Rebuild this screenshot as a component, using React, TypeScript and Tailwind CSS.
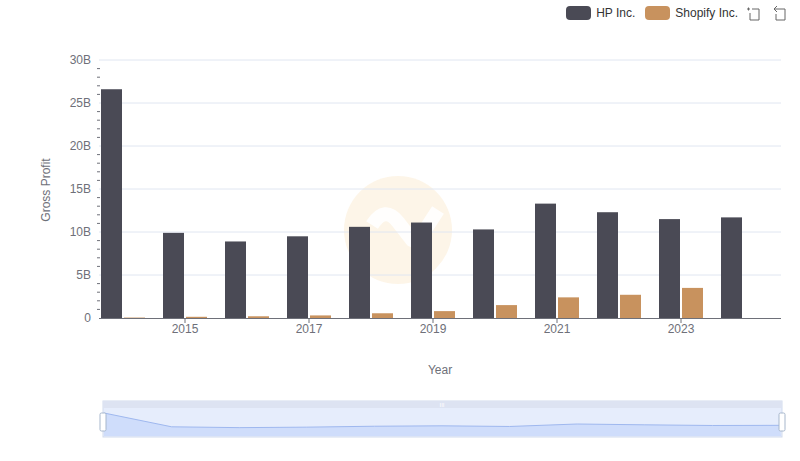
export default function App() {
  const hp = [26.6, 9.9, 8.9, 9.5, 10.6, 11.1, 10.3, 13.3, 12.3, 11.5, 11.7];
  const sh = [0.05, 0.14, 0.2, 0.3, 0.55, 0.8, 1.5, 2.4, 2.7, 3.5, 0];
  const x0 = 99, cw = 62, y0 = 318, k = 258 / 30;
  const ticks = [0, 5, 10, 15, 20, 25, 30];
  const minor: number[] = [];
  for (let i = 0; i <= 30; i++) if (i % 5) minor.push(i);
  const zx = (i: number) => 104 + (i * 676) / 10;
  const zy = (v: number) => 435 - (v / 26.6) * 22;
  const line = hp.map((v, i) => `${zx(i)},${zy(v)}`).join(" ");
  return (
    <div className="relative w-[800px] h-[461px] bg-white" style={{ fontFamily: '"Liberation Sans", Arial, sans-serif' }}>
      <div className="absolute top-[4px] right-[12px] flex items-center text-[12px] text-[#333]">
        <div className="w-[25px] h-[14px] rounded-[4px] bg-[#4a4a55] mr-[5px]" />
        <span className="mr-[10px]">HP Inc.</span>
        <div className="w-[25px] h-[14px] rounded-[4px] bg-[#c8925e] mr-[5px]" />
        <span className="mr-[8px]">Shopify Inc.</span>
        <svg width="16" height="16" viewBox="0 0 16 16" className="mr-[10px]" fill="none" stroke="#666" strokeWidth="1">
          <path d="M1 4h3M2.5 2.5v3M6 4h7v11H4V8" />
        </svg>
        <svg width="16" height="16" viewBox="0 0 16 16" fill="none" stroke="#666" strokeWidth="1">
          <path d="M5 1L2 4l3 3M2 4h11v11H4V9" />
        </svg>
      </div>
      <svg width="800" height="461" className="block">
        <g opacity="0.12">
          <circle cx="398" cy="230" r="54" fill="#f0b040" />
        </g>
        <path d="M372 225 Q385 205 398 222 L412 240 Q420 245 425 230 L438 210" stroke="white" strokeWidth="14" fill="none" opacity="0.9" />
        {ticks.map((t) => (
          <g key={t}>
            {t > 0 && <line x1={x0} x2={781} y1={y0 - t * k} y2={y0 - t * k} stroke="#e0e6f1" />}
            <text x={91} y={y0 - t * k + 4} textAnchor="end" fontSize="12" fill="#6e7079">{t === 0 ? "0" : `${t}B`}</text>
          </g>
        ))}
        {minor.map((m) => (
          <line key={m} x1={97} x2={100} y1={y0 - m * k} y2={y0 - m * k} stroke="#6e7079" />
        ))}
        <text transform="translate(50 190) rotate(-90)" textAnchor="middle" fontSize="12" fill="#6e7079">Gross Profit</text>
        {hp.map((v, i) => {
          const cx = x0 + i * cw;
          return (
            <g key={i}>
              <rect x={cx + 2} y={y0 - v * k} width={21} height={v * k} fill="#4a4a55" />
              {sh[i] > 0 && <rect x={cx + 25} y={y0 - sh[i] * k} width={21} height={Math.max(sh[i] * k, 1)} fill="#c8925e" />}
            </g>
          );
        })}
        <line x1={x0} x2={781} y1={y0 + 0.5} y2={y0 + 0.5} stroke="#6e7079" />
        {[1, 3, 5, 7, 9].map((i) => {
          const tx = x0 + i * cw + 24;
          return (
            <g key={i}>
              <line x1={tx} x2={tx} y1={y0} y2={y0 + 5} stroke="#6e7079" />
              <text x={tx} y={y0 + 15} textAnchor="middle" fontSize="12" fill="#6e7079">{2014 + i}</text>
            </g>
          );
        })}
        <text x={440} y={374} textAnchor="middle" fontSize="12" fill="#6e7079">Year</text>
        <rect x={103} y={401} width={679} height={36} fill="#e6edfc" stroke="#d2dbee" />
        <rect x={103} y={401} width={679} height={7} fill="#dde3f2" />
        <text x={442} y={407} textAnchor="middle" fontSize="6" fill="#fff">III</text>
        <polygon points={`104,436 ${line} 781,436`} fill="#c9d8fa" opacity="0.8" />
        <polyline points={line} fill="none" stroke="#9fb8ef" />
        <rect x={100} y={413} width={6} height={18} rx={1.5} fill="#fff" stroke="#a7b7cc" />
        <rect x={779} y={413} width={6} height={18} rx={1.5} fill="#fff" stroke="#a7b7cc" />
      </svg>
    </div>
  );
}
